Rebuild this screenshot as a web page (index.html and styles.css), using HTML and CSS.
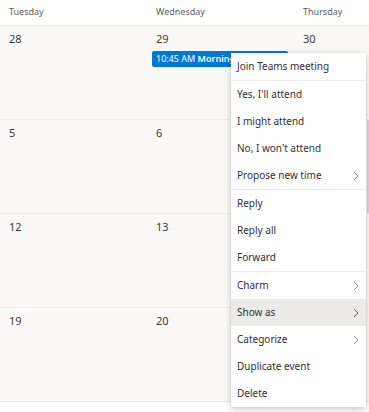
FILE: index.html
```html
<!DOCTYPE html>
<html lang="en">
<head>
  <meta charset="UTF-8">
  <title>Calendar</title>
  <link rel="stylesheet" href="styles.css">
</head>
<body>

  <div class="calendar">
    <div class="day-names">
      <div class="day-name">Tuesday</div>
      <div class="day-name">Wednesday</div>
      <div class="day-name">Thursday</div>
    </div>

    <div class="week">
      <div class="day"><span class="num">28</span></div>
      <div class="day">
        <span class="num">29</span>
        <div class="event"><span class="time">10:45 AM</span> <b>Morning</b></div>
      </div>
      <div class="day"><span class="num">30</span></div>
    </div>
    <div class="week">
      <div class="day"><span class="num">5</span></div>
      <div class="day"><span class="num">6</span></div>
      <div class="day"><div class="next-event"></div></div>
    </div>
    <div class="week">
      <div class="day"><span class="num">12</span></div>
      <div class="day"><span class="num">13</span></div>
      <div class="day"></div>
    </div>
    <div class="week">
      <div class="day"><span class="num">19</span></div>
      <div class="day"><span class="num">20</span></div>
      <div class="day"></div>
    </div>
  </div>

  <div class="menu">
    <div class="group">
      <div class="item">Join Teams meeting</div>
    </div>
    <div class="group">
      <div class="item">Yes, I'll attend</div>
      <div class="item">I might attend</div>
      <div class="item">No, I won't attend</div>
      <div class="item sub">Propose new time
        <svg width="6" height="10" viewBox="0 0 6 10"><path d="M1 1l4 4-4 4" fill="none" stroke="#8a8886" stroke-width="1"/></svg>
      </div>
    </div>
    <div class="group">
      <div class="item">Reply</div>
      <div class="item">Reply all</div>
      <div class="item">Forward</div>
    </div>
    <div class="group">
      <div class="item sub">Charm
        <svg width="6" height="10" viewBox="0 0 6 10"><path d="M1 1l4 4-4 4" fill="none" stroke="#8a8886" stroke-width="1"/></svg>
      </div>
      <div class="item sub active">Show as
        <svg width="6" height="10" viewBox="0 0 6 10"><path d="M1 1l4 4-4 4" fill="none" stroke="#605e5c" stroke-width="1"/></svg>
      </div>
      <div class="item sub">Categorize
        <svg width="6" height="10" viewBox="0 0 6 10"><path d="M1 1l4 4-4 4" fill="none" stroke="#8a8886" stroke-width="1"/></svg>
      </div>
      <div class="item">Duplicate event</div>
      <div class="item">Delete</div>
    </div>
  </div>

</body>
</html>
```

FILE: styles.css
```css
* { box-sizing: border-box; margin: 0; padding: 0; }
body {
  font-family: 'Noto Sans', 'Open Sans', sans-serif;
  background: #fff;
  color: #323130;
  width: 369px;
  height: 412px;
  overflow: hidden;
  position: relative;
}
.day-names {
  display: grid;
  grid-template-columns: 147px 147px 1fr;
  height: 26px;
  border-bottom: 1px solid #edebe9;
  background: #fff;
}
.day-name {
  padding: 5px 0 0 9px;
  font-size: 9px;
  color: #605e5c;
}
.week {
  display: grid;
  grid-template-columns: 147px 147px 1fr;
  height: 94px;
  background: #faf9f8;
  border-bottom: 1px solid #edebe9;
}
.day {
  padding: 5px 0 0 9px;
  position: relative;
}
.num {
  display: block;
  font-size: 11px;
  line-height: 16px;
  color: #3b3a39;
}
.event {
  margin: 4px 6px 0 -4px;
  height: 16px;
  background: #0078d4;
  border-radius: 2px;
  color: #fff;
  font-size: 9px;
  line-height: 16px;
  padding-left: 4px;
  white-space: nowrap;
  overflow: hidden;
}
.event b { font-weight: 600; }
.next-event {
  position: absolute;
  top: 0;
  right: 0;
  width: 2.5px;
  height: 93px;
  background: #e4cfe2;
}

/* context menu */
.menu {
  position: absolute;
  left: 231px;
  top: 53px;
  width: 135px;
  background: #fff;
  box-shadow: 0 3px 8px rgba(0, 0, 0, .18), 0 0 2px rgba(0, 0, 0, .12);
}
.group + .group {
  border-top: 1px solid #edebe9;
}
.item {
  height: 27px;
  line-height: 27px;
  padding: 0 7px 0 6px;
  font-size: 10px;
  color: #323130;
  display: flex;
  justify-content: space-between;
  align-items: center;
  white-space: nowrap;
}
.item.active {
  background: #edebe9;
}
```
